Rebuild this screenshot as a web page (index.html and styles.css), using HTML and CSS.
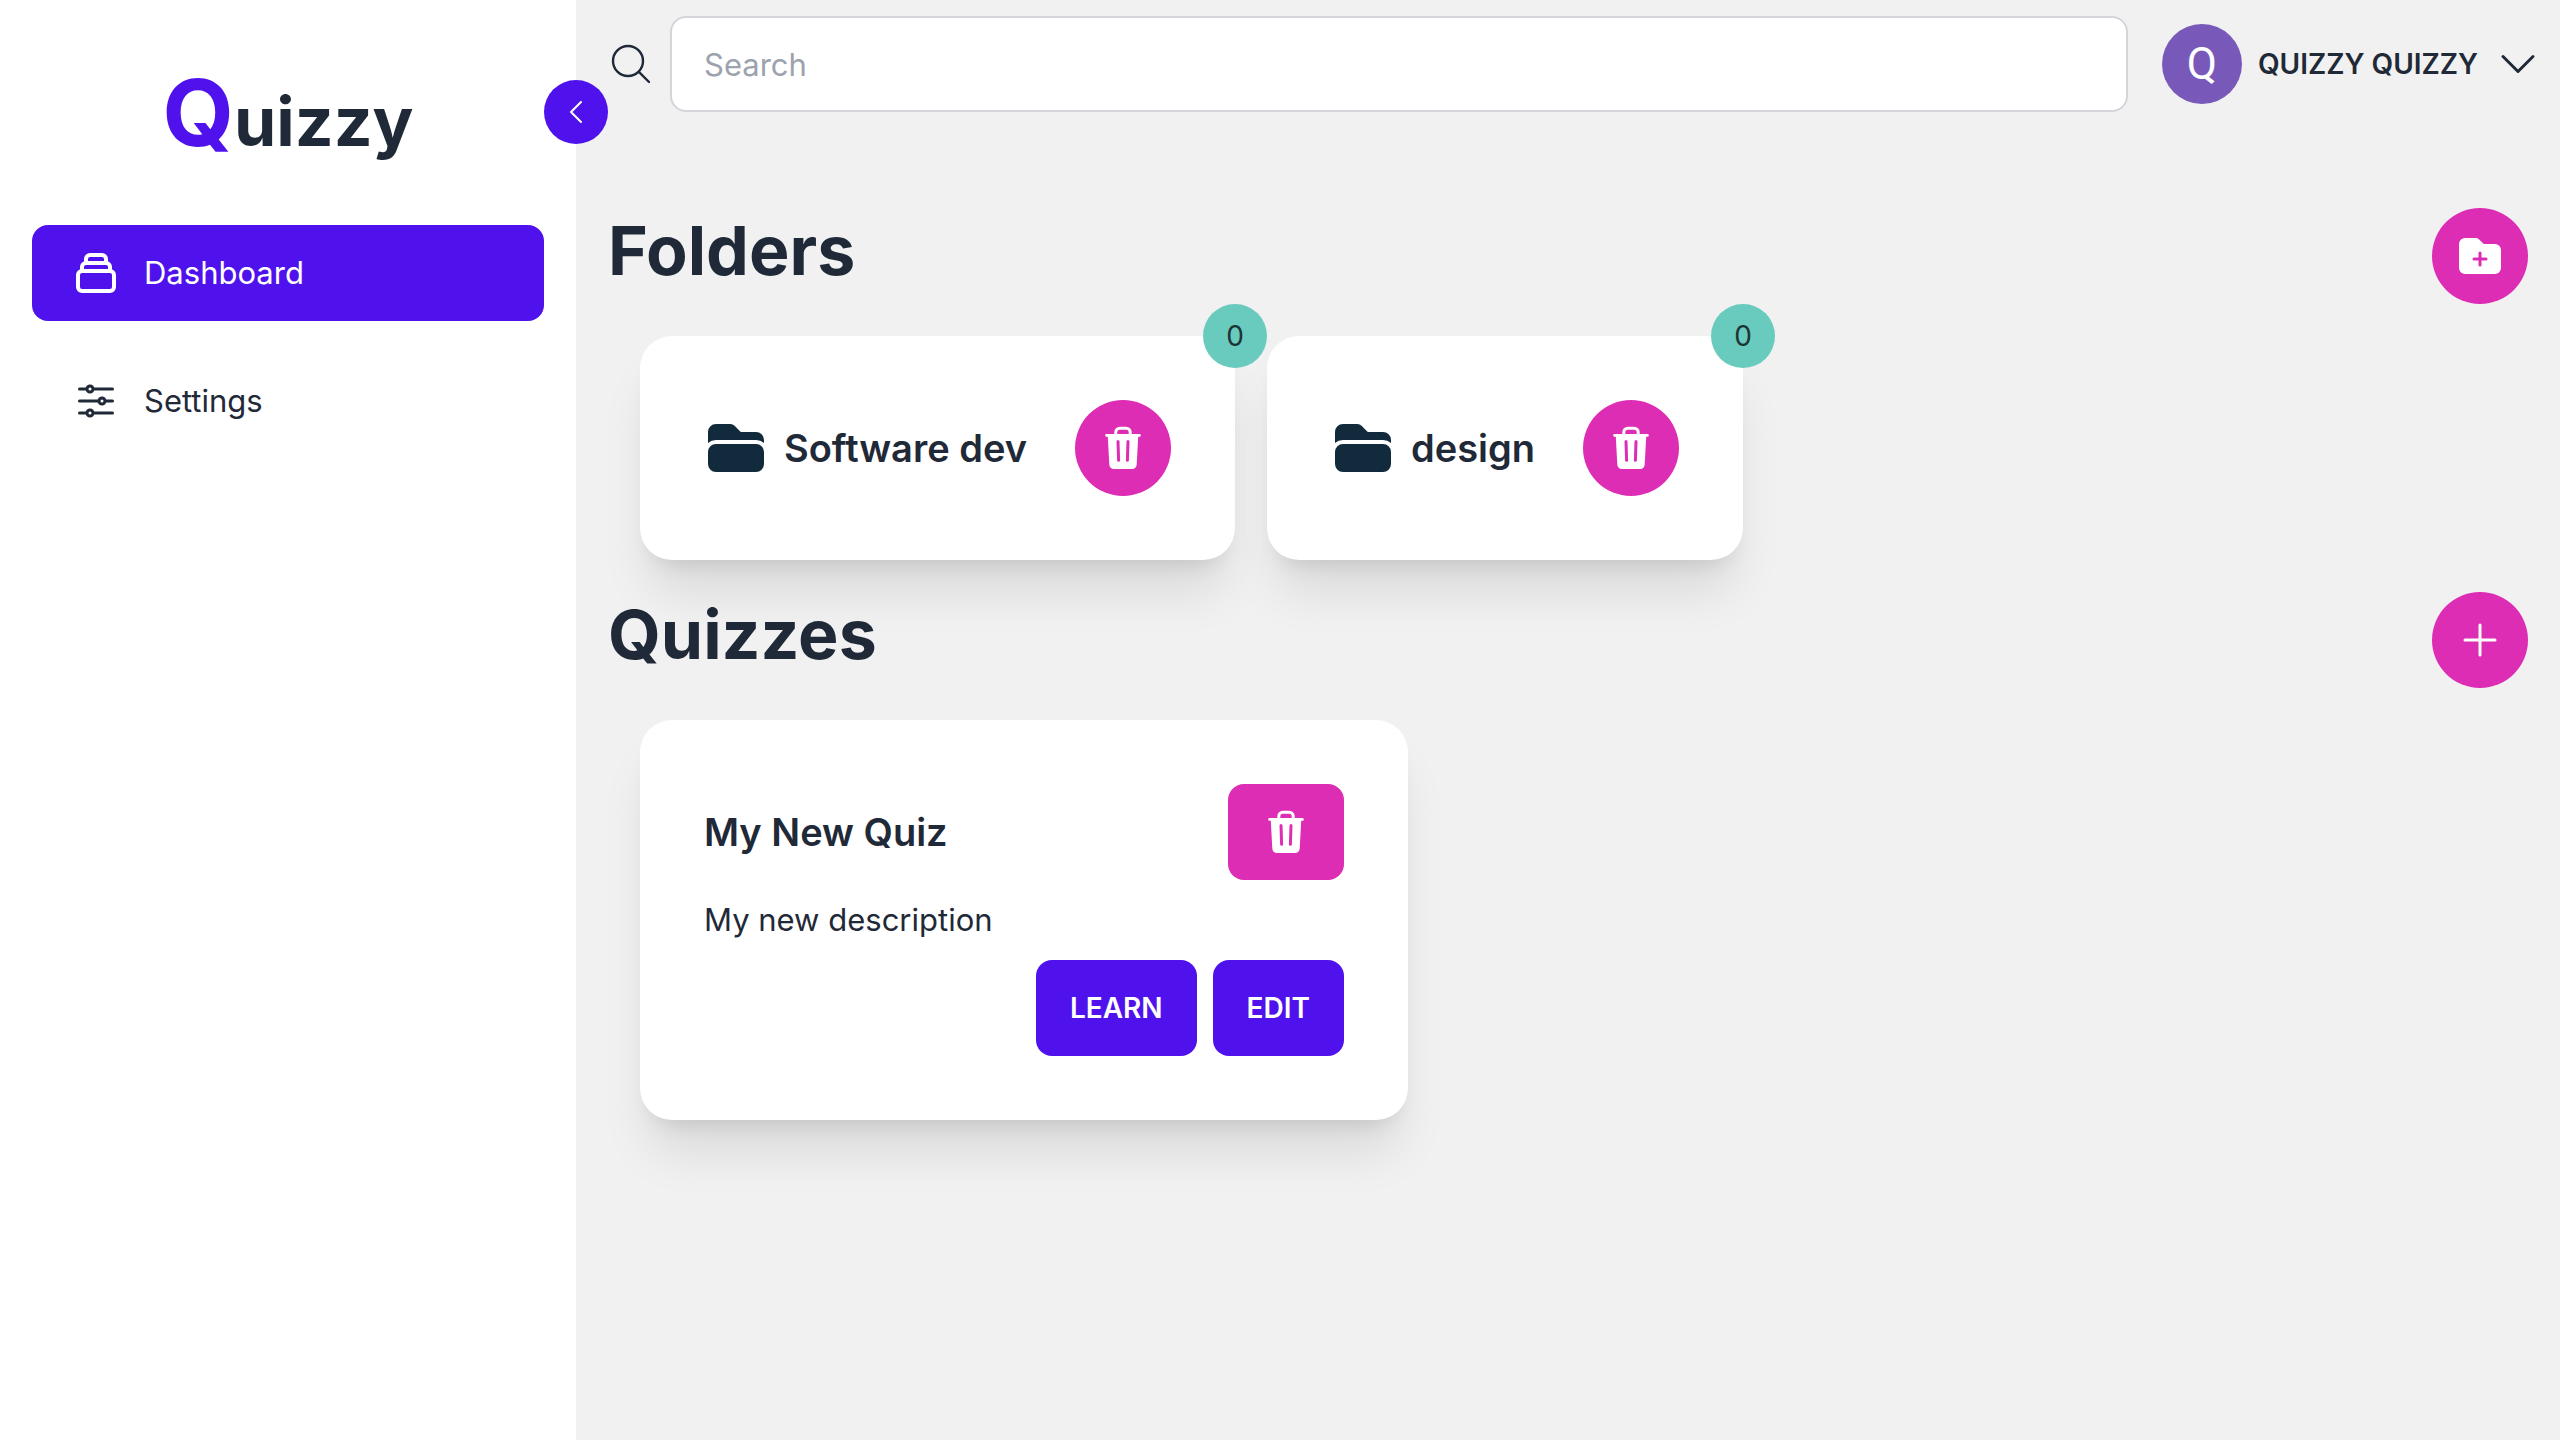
FILE: index.html
```html
<!DOCTYPE html>
<html lang="en">
<head>
<meta charset="utf-8">
<meta name="viewport" content="width=device-width, initial-scale=1">
<title>Quizzy</title>
<link rel="stylesheet" href="styles.css">
</head>
<body>
<svg class="sprite" aria-hidden="true">
  <symbol id="trash" viewBox="0 0 24 24">
    <path fill="none" stroke="currentColor" stroke-width="1.5" d="M8.4 5.600V4.100a2 2 0 0 1 2-2h3.200a2 2 0 0 1 2 2v1.500"/>
    <path fill="none" stroke="currentColor" stroke-width="1.400" stroke-linecap="round" d="M3.800 5.700h16.400"/>
    <path fill="currentColor" fill-rule="evenodd" d="M4.350 5.500h15.300l-.8 14.700a2.300 2.300 0 0 1-2.300 2.300H7.450a2.300 2.300 0 0 1-2.300-2.300zM9.500 8a.75.75 0 0 0-.75.75l.3 9.400a.75.75 0 0 0 1.500 0l-.3-9.400A.75.75 0 0 0 9.500 8zM14.500 8a.75.75 0 0 0-.75.75l-.3 9.400a.75.75 0 0 0 1.500 0l.3-9.400A.75.75 0 0 0 14.500 8z"/>
  </symbol>
  <symbol id="folder" viewBox="0 0 24 24">
    <path fill="currentColor" d="M19.5 21a3 3 0 003-3v-4.500a3 3 0 00-3-3h-15a3 3 0 00-3 3V18a3 3 0 003 3h15zM1.500 10.146V6a3 3 0 013-3h5.379a2.250 2.250 0 011.590.659l2.122 2.121c.14.141.331.22.53.22H19.500a3 3 0 013 3v1.146A4.483 4.483 0 0019.500 9h-15a4.483 4.483 0 00-3 1.146z"/>
  </symbol>
</svg>
<div class="app">
  <aside class="sidebar">
    <div class="logo"><span class="logo-initial">Q</span>uizzy</div>
    <nav class="nav">
      <a class="nav-item active" href="#dashboard">
        <svg class="icon bold-line" viewBox="0 0 24 24"><path d="M19 11H5m14 0a2 2 0 012 2v6a2 2 0 01-2 2H5a2 2 0 01-2-2v-6a2 2 0 012-2m14 0V9a2 2 0 00-2-2M5 11V9a2 2 0 012-2m0 0V5a2 2 0 012-2h6a2 2 0 012 2v2M7 7h10"/></svg>
        Dashboard
      </a>
      <a class="nav-item" href="#settings">
        <svg class="icon line" viewBox="0 0 24 24"><path d="M10.5 6h9.75M10.5 6a1.5 1.5 0 11-3 0m3 0a1.5 1.5 0 10-3 0M3.75 6H7.5m3 12h9.75m-9.75 0a1.5 1.5 0 01-3 0m3 0a1.5 1.5 0 00-3 0m-3.75 0H7.5m9-6h3.75m-3.75 0a1.5 1.5 0 01-3 0m3 0a1.5 1.5 0 00-3 0m-9.75 0h9.75"/></svg>
        Settings
      </a>
    </nav>
    <button class="collapse" type="button" aria-label="Collapse sidebar">
      <svg class="icon-small line" viewBox="0 0 24 24"><path d="M15.75 19.5L8.25 12l7.5-7.5"/></svg>
    </button>
  </aside>
  <div class="page">
    <header class="topbar">
      <label class="search-label" for="search" aria-label="Search">
        <svg class="icon thin-line" viewBox="0 0 24 24"><path d="M21 21l-5.197-5.197m0 0A7.5 7.5 0 105.196 5.196a7.5 7.5 0 0010.607 10.607z"/></svg>
      </label>
      <input class="search" id="search" type="text" placeholder="Search">
      <button class="account" type="button">
        <span class="avatar">Q</span>
        <span class="account-name">QUIZZY QUIZZY</span>
        <svg class="icon line" viewBox="0 0 24 24"><path d="M19.5 8.25l-7.5 7.5-7.5-7.5"/></svg>
      </button>
    </header>
    <main class="content">
      <section class="section">
        <div class="section-head">
          <h1 class="heading">Folders</h1>
          <button class="round" type="button" aria-label="Add folder">
            <svg class="icon" viewBox="0 0 24 24"><path fill="currentColor" fill-rule="evenodd" d="M19.5 21a3 3 0 003-3V9a3 3 0 00-3-3h-5.379a.75.75 0 01-.53-.22L11.470 3.660A2.250 2.250 0 009.879 3H4.500a3 3 0 00-3 3v12a3 3 0 003 3h15zm-6.750-10.500a.75.75 0 00-1.500 0v2.250H9a.75.75 0 000 1.500h2.250v2.250a.75.75 0 001.500 0v-2.250H15a.75.75 0 000-1.500h-2.250V10.500z"/></svg>
          </button>
        </div>
        <div class="cards">
          <article class="card folder">
            <span class="badge">0</span>
            <svg class="icon-large"><use href="#folder"/></svg>
            <h2 class="title">Software dev</h2>
            <button class="round" type="button" aria-label="Delete folder"><svg class="icon"><use href="#trash"/></svg></button>
          </article>
          <article class="card folder">
            <span class="badge">0</span>
            <svg class="icon-large"><use href="#folder"/></svg>
            <h2 class="title">design</h2>
            <button class="round" type="button" aria-label="Delete folder"><svg class="icon"><use href="#trash"/></svg></button>
          </article>
        </div>
      </section>
      <section class="section">
        <div class="section-head">
          <h1 class="heading">Quizzes</h1>
          <button class="round" type="button" aria-label="Add quiz">
            <svg class="icon line" viewBox="0 0 24 24"><path d="M12 4.5v15m7.5-7.5h-15"/></svg>
          </button>
        </div>
        <div class="cards">
          <article class="card quiz">
            <div class="quiz-head">
              <h2 class="title">My New Quiz</h2>
              <button class="btn btn-delete" type="button" aria-label="Delete quiz"><svg class="icon"><use href="#trash"/></svg></button>
            </div>
            <p class="description">My new description</p>
            <div class="actions">
              <button class="btn" type="button">LEARN</button>
              <button class="btn" type="button">EDIT</button>
            </div>
          </article>
        </div>
      </section>
    </main>
  </div>
</div>
</body>
</html>
```
FILE: styles.css
```css
:root {
  --primary: #4f12ed;
  --secondary: #dd2db4;
  --accent: #69cbbe;
  --ink: #1f2937;
  --surface: #ffffff;
  --backdrop: #f1f1f1;
}

* {
  box-sizing: border-box;
}

body {
  margin: 0;
  background: var(--backdrop);
  color: var(--ink);
  font-family: Inter, "Liberation Sans", sans-serif;
  font-size: 31px;
  line-height: 48px;
}

h1,
h2,
p {
  margin: 0;
}

button {
  border: 0;
  padding: 0;
  background: none;
  color: inherit;
  font: inherit;
  cursor: pointer;
}

svg {
  display: block;
  flex: none;
}

.sprite {
  position: absolute;
  width: 0;
  height: 0;
}

.icon {
  width: 48px;
  height: 48px;
}

.icon-small {
  width: 32px;
  height: 32px;
}

.icon-large {
  width: 64px;
  height: 64px;
  color: #112b3c;
}

.line,
.thin-line,
.bold-line {
  fill: none;
  stroke: currentColor;
  stroke-width: 1.5;
  stroke-linecap: round;
  stroke-linejoin: round;
}

.thin-line {
  stroke-width: 1.2;
}

.bold-line {
  stroke-width: 2;
}

.app {
  display: flex;
  min-height: 100vh;
}

.sidebar {
  position: relative;
  flex: none;
  width: 576px;
  padding: 65px 32px;
  background: var(--surface);
}

.logo {
  margin-bottom: 48px;
  font-size: 68px;
  font-weight: 700;
  line-height: 112px;
  text-align: center;
}

.logo-initial {
  color: var(--primary);
  font-size: 92px;
  line-height: 80px;
}

.nav {
  display: flex;
  flex-direction: column;
  gap: 32px;
}

.nav-item {
  display: flex;
  align-items: center;
  gap: 24px;
  height: 96px;
  padding: 0 40px;
  border-radius: 16px;
  color: inherit;
  text-decoration: none;
}

.active {
  background: var(--primary);
  color: #ffffff;
}

.collapse {
  position: absolute;
  top: 80px;
  right: -32px;
  display: grid;
  place-items: center;
  width: 64px;
  height: 64px;
  border-radius: 50%;
  background: var(--primary);
  color: #ffffff;
}

.page {
  flex: 1;
  min-width: 0;
}

.topbar {
  display: flex;
  align-items: center;
  padding: 16px 18px 16px 31px;
}

.search-label {
  margin-right: 15px;
}

.search {
  flex: 1;
  min-width: 0;
  height: 96px;
  margin-right: 34px;
  padding: 0 32px;
  border: 2px solid #d4d5da;
  border-radius: 16px;
  background: var(--surface);
  color: inherit;
  font: inherit;
}

.search::placeholder {
  color: #9ca3af;
  opacity: 1;
}

.account {
  display: flex;
  align-items: center;
  gap: 16px;
}

.avatar {
  display: grid;
  place-items: center;
  width: 80px;
  height: 80px;
  border-radius: 50%;
  background: #7859b9;
  color: #ffffff;
  font-family: Roboto, sans-serif;
  font-size: 44px;
}

.account-name {
  font-size: 28px;
  font-weight: 600;
}

.content {
  display: flex;
  flex-direction: column;
  gap: 32px;
  padding: 80px 32px 32px;
}

.section {
  display: flex;
  flex-direction: column;
  gap: 32px;
}

.section-head {
  display: flex;
  align-items: flex-start;
  justify-content: space-between;
}

.heading {
  font-size: 68px;
  font-weight: 700;
  line-height: 84px;
}

.round {
  display: grid;
  flex: none;
  place-items: center;
  width: 96px;
  height: 96px;
  border-radius: 50%;
  background: var(--secondary);
  color: #ffffff;
}

.cards {
  display: flex;
  flex-wrap: wrap;
  gap: 32px;
  padding: 0 32px;
}

.card {
  position: relative;
  display: flex;
  padding: 64px;
  border-radius: 32px;
  background: var(--surface);
  box-shadow: 0 40px 50px -10px rgb(0 0 0 / 0.1), 0 16px 20px -12px rgb(0 0 0 / 0.1);
}

.folder {
  align-items: center;
}

.folder .title {
  margin: 0 48px 0 16px;
}

.title {
  font-size: 38px;
  font-weight: 600;
  line-height: 56px;
}

.badge {
  position: absolute;
  top: -32px;
  right: -32px;
  z-index: 1;
  display: grid;
  place-items: center;
  width: 64px;
  height: 64px;
  border-radius: 50%;
  background: var(--accent);
  color: #1c3534;
  font-size: 28px;
}

.quiz {
  flex-direction: column;
  gap: 16px;
  width: 768px;
}

.quiz-head {
  display: flex;
  align-items: center;
  justify-content: space-between;
}

.actions {
  display: flex;
  justify-content: flex-end;
  gap: 16px;
}

.btn {
  display: grid;
  place-items: center;
  height: 96px;
  padding: 0 34px;
  border-radius: 16px;
  background: var(--primary);
  color: #ffffff;
  font-size: 28px;
  font-weight: 600;
}

.btn-delete {
  background: var(--secondary);
}
```
